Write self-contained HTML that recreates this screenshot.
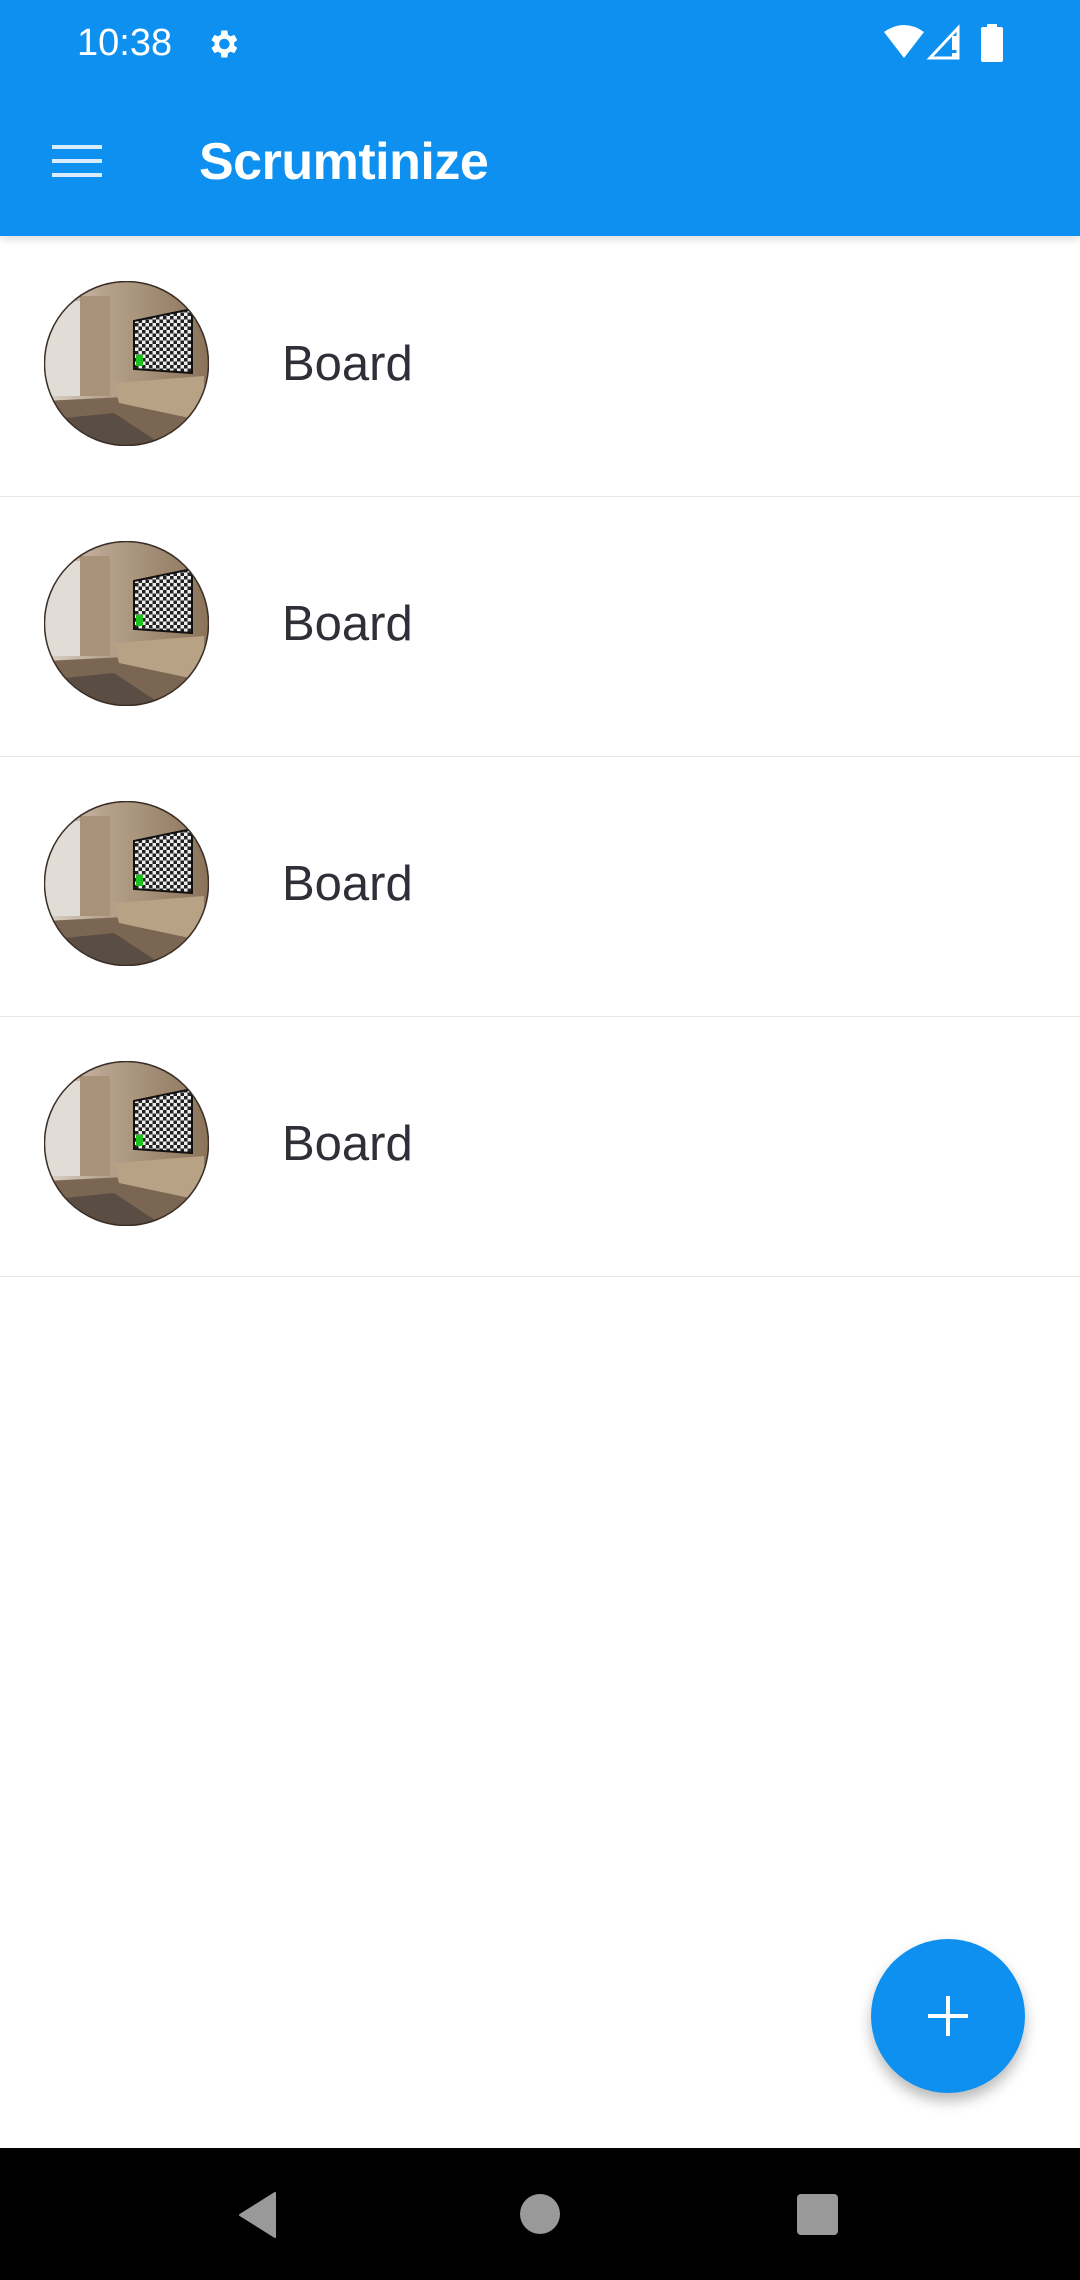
<!DOCTYPE html>
<html><head><meta charset="utf-8">
<style>
html,body{margin:0;padding:0;width:1080px;height:2280px;overflow:hidden;background:#fff;font-family:"Liberation Sans",sans-serif;}
.bar{position:absolute;left:0;top:0;width:1080px;height:236px;background:#0e90f0;box-shadow:0 4px 8px rgba(0,0,0,.12);z-index:2}
.time{position:absolute;left:77px;top:22px;color:#fff;font-size:38px;}
.title{position:absolute;left:199px;top:132px;color:#fff;font-size:52px;font-weight:bold;letter-spacing:-.5px}
.row{position:absolute;left:0;width:1080px;height:259px;border-bottom:1.5px solid #e6e6e6}
.row svg{position:absolute;left:44px;top:44px}
.row span{position:absolute;left:282px;top:99px;font-size:49px;color:#2f3037}
.fab{position:absolute;left:871px;top:1939px;width:154px;height:154px;border-radius:50%;background:#0e90f0;box-shadow:0 8px 14px rgba(0,0,0,.28)}
.nav{position:absolute;left:0;top:2148px;width:1080px;height:132px;background:#000}
</style></head><body>
<svg width="0" height="0" style="position:absolute">
<defs>
<pattern id="chk" width="7" height="7" patternUnits="userSpaceOnUse"><rect width="7" height="7" fill="#eee"/><rect width="3.5" height="3.5" fill="#222"/><rect x="3.5" y="3.5" width="3.5" height="3.5" fill="#222"/></pattern>
<linearGradient id="wall" x1="0" y1="0" x2="1" y2="0"><stop offset="0" stop-color="#dcd4cc"/><stop offset=".35" stop-color="#b8a48e"/><stop offset="1" stop-color="#8a7358"/></linearGradient>
<clipPath id="cc"><circle cx="82.5" cy="82.5" r="82"/></clipPath>
<symbol id="av" viewBox="0 0 165 165">
<g clip-path="url(#cc)">
<rect width="165" height="165" fill="url(#wall)"/>
<rect x="0" y="20" width="36" height="95" fill="#e2dcd6"/>
<rect x="36" y="15" width="30" height="100" fill="#a89278"/>
<polygon points="0,120 165,112 165,165 0,165" fill="#7a6652"/>
<polygon points="10,138 70,132 120,165 20,165" fill="#5a4e44"/>
<polygon points="70,102 160,95 160,140 75,122" fill="#b8a286"/>
<polygon points="90,40 148,28 148,92 90,88" fill="url(#chk)" stroke="#111" stroke-width="2"/>
<rect x="92" y="74" width="7" height="11" fill="#1fbf1f"/>
</g>
<circle cx="82.5" cy="82.5" r="82" fill="none" stroke="#3a2e26" stroke-width="1.5"/>
</symbol>
</defs></svg>

<div class="bar">
<div class="time">10:38</div>
<svg style="position:absolute;left:205px;top:26px" width="36" height="36" viewBox="0 0 24 24"><path fill="#fff" d="M19.4 13a7.5 7.5 0 0 0 0-2l2.1-1.6-2-3.5-2.5 1a7 7 0 0 0-1.7-1L14.9 3h-4l-.4 2.9a7 7 0 0 0-1.7 1l-2.5-1-2 3.5L6.4 11a7.5 7.5 0 0 0 0 2l-2.1 1.6 2 3.5 2.5-1a7 7 0 0 0 1.7 1l.4 2.9h4l.4-2.9a7 7 0 0 0 1.7-1l2.5 1 2-3.5zM12.9 15.5a3.5 3.5 0 1 1 0-7 3.5 3.5 0 0 1 0 7z"/></svg>
<svg style="position:absolute;left:882px;top:24px" width="44" height="36" viewBox="0 0 44 36"><path fill="#fff" d="M2 8 Q22 -6 42 8 L22 34 Z"/></svg>
<svg style="position:absolute;left:926px;top:24px" width="38" height="38" viewBox="0 0 38 38"><path fill="none" stroke="#fff" stroke-width="3" d="M4 34 L32 4 L32 34 Z"/><rect x="26" y="12" width="5" height="14" fill="#fff"/><rect x="26" y="29" width="5" height="4" fill="#fff"/></svg>
<svg style="position:absolute;left:981px;top:24px" width="22" height="38" viewBox="0 0 22 38"><rect x="6" y="0" width="10" height="4" fill="#fff"/><rect x="0" y="3" width="22" height="35" rx="2" fill="#fff"/></svg>
<svg style="position:absolute;left:52px;top:145px" width="50" height="32" viewBox="0 0 50 32"><rect y="0" width="50" height="4" fill="#d8ecfc"/><rect y="14" width="50" height="4" fill="#d8ecfc"/><rect y="28" width="50" height="4" fill="#d8ecfc"/></svg>
<div class="title">Scrumtinize</div>
</div>

<div class="row" style="top:237px"><svg width="165" height="165"><use href="#av"/></svg><span>Board</span></div>
<div class="row" style="top:497px"><svg width="165" height="165"><use href="#av"/></svg><span>Board</span></div>
<div class="row" style="top:757px"><svg width="165" height="165"><use href="#av"/></svg><span>Board</span></div>
<div class="row" style="top:1017px"><svg width="165" height="165"><use href="#av"/></svg><span>Board</span></div>

<div class="fab"><svg style="position:absolute;left:57px;top:57px" width="40" height="40" viewBox="0 0 40 40"><rect x="18" y="0" width="4" height="40" fill="#fff"/><rect x="0" y="18" width="40" height="4" fill="#fff"/></svg></div>

<div class="nav">
<svg style="position:absolute;left:238px;top:44px" width="40" height="46" viewBox="0 0 40 46"><path fill="#999" d="M37 1 L37 45 L2 23 Z" stroke="#999" stroke-width="2" stroke-linejoin="round"/></svg>
<div style="position:absolute;left:520px;top:46px;width:40px;height:40px;border-radius:50%;background:#999"></div>
<div style="position:absolute;left:797px;top:46px;width:41px;height:41px;border-radius:4px;background:#999"></div>
</div>
</body></html>
